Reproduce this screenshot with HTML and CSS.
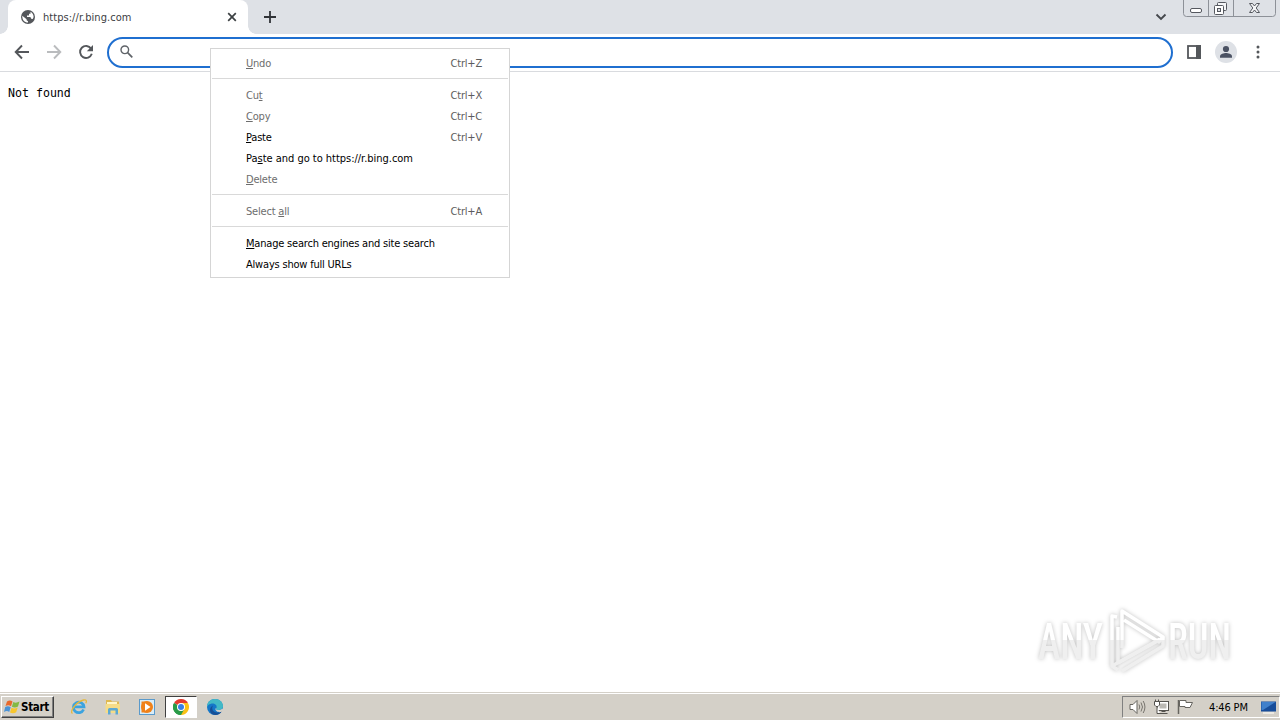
FILE: index.html
```html
<!DOCTYPE html>
<html lang="en">
<head>
  <meta charset="UTF-8" />
  <meta name="viewport" content="width=device-width, initial-scale=1.0"/>
  <title>https://r.bing.com</title>
  <link rel="stylesheet" href="styles.css">
</head>
<body>

  <!-- Tab strip -->
  <header class="tab-strip">
    <div class="tab">
      <svg class="globe" width="16" height="16" viewBox="0 0 16 16">
        <circle cx="8" cy="8" r="7" fill="#54575b"/>
        <path d="M2.300 6.800l4.300 3.400v1l1.400 1v1.400C4.500 13.600 2 11 2.300 6.800z M10.500 2.700c2 1 3.200 3 3.100 5.300l-.8 2-1.600-.3-.8-1.700H7V6.500h2V4.800h1.500z" fill="#fff"/>
      </svg>
      <span class="tab-title">https://r.bing.com</span>
      <svg class="tab-close" width="10" height="10" viewBox="0 0 10 10">
        <path d="M1.200 1.200l7.600 7.600M8.800 1.200L1.200 8.800" stroke="#3c4043" stroke-width="1.700"/>
      </svg>
    </div>
    <svg class="new-tab" width="12" height="12" viewBox="0 0 12 12">
      <path d="M6 0v12M0 6h12" stroke="#303338" stroke-width="1.800"/>
    </svg>
    <svg class="tab-search" width="12" height="8" viewBox="0 0 12 8">
      <path d="M1.500 1.500L6 6l4.500-4.500" fill="none" stroke="#45484d" stroke-width="1.900"/>
    </svg>
    <!-- Window buttons -->
    <svg class="window-buttons" width="97" height="18" viewBox="0 0 97 18">
      <path d="M.5 0v13.500q0 3 3 3h86q3 0 3-3V0M25.500 0v16.500M50.500 0v16.500" fill="none" stroke="#8d9198"/>
      <rect x="7.500" y="8.500" width="11" height="4" rx="1.500" fill="#fff" stroke="#55585f"/>
      <rect x="34.500" y="2.500" width="9" height="8" rx="1" fill="#f4f5f7" stroke="#55585f"/>
      <rect x="31.500" y="5.500" width="9" height="9" rx="1" fill="#fff" stroke="#55585f"/>
      <rect x="34.500" y="8.500" width="3" height="3" fill="#dee1e6" stroke="#55585f"/>
      <path d="M66.500 3.500h3l2 2.500 2-2.500h3l-3.300 4.500 3.300 4.500h-3l-2-2.500-2 2.500h-3L69.800 8z" fill="#f4f5f7" stroke="#55585f"/>
    </svg>
  </header>

  <!-- Toolbar -->
  <nav class="toolbar">
    <svg width="16" height="16" viewBox="0 0 16 16">
      <path d="M15 8H2M8 1.500L1.700 8 8 14.500" fill="none" stroke="#54575b" stroke-width="1.900"/>
    </svg>
    <svg width="16" height="16" viewBox="0 0 16 16">
      <path d="M1 8h13M8 1.500L14.300 8 8 14.500" fill="none" stroke="#babcbe" stroke-width="1.900"/>
    </svg>
    <svg width="16" height="16" viewBox="0 0 16 16">
      <path d="M13.100 4.600A6 6 0 1 0 13.800 9.800" fill="none" stroke="#54575b" stroke-width="1.900"/>
      <path d="M15 1v6.200H8.800z" fill="#54575b"/>
    </svg>
    <div class="omnibox">
      <svg width="13" height="13" viewBox="0 0 13 13">
        <circle cx="4.800" cy="4.800" r="3.800" fill="none" stroke="#5f6368" stroke-width="1.400"/>
        <path d="M7.600 7.600l4.700 4.700" stroke="#5f6368" stroke-width="1.700"/>
      </svg>
    </div>
    <svg class="side-panel" width="14" height="14" viewBox="0 0 14 14">
      <rect x="1" y="1" width="12" height="12" fill="#fff" stroke="#54575b" stroke-width="1.800"/>
      <path d="M9 0h5v14H9z" fill="#54575b"/>
    </svg>
    <svg class="profile" width="22" height="22" viewBox="0 0 22 22">
      <circle cx="11" cy="11" r="11" fill="#dee1e6"/>
      <circle cx="11" cy="8" r="3.100" fill="#4b5263"/>
      <path d="M5 16.800v-1.500c0-2 4-3.200 6-3.200s6 1.200 6 3.200v1.500z" fill="#4b5263"/>
    </svg>
    <svg class="more" width="4" height="14" viewBox="0 0 4 14">
      <circle cx="2" cy="2" r="1.500" fill="#54575b"/>
      <circle cx="2" cy="7" r="1.500" fill="#54575b"/>
      <circle cx="2" cy="12" r="1.500" fill="#54575b"/>
    </svg>
  </nav>

  <!-- Page content -->
  <main class="page">
    <pre>Not found</pre>

    <svg class="watermark" width="220" height="80" viewBox="0 0 220 80">
      <defs>
        <linearGradient id="fade" gradientUnits="userSpaceOnUse" x1="0" y1="0" x2="0" y2="80">
          <stop offset="0.460" stop-color="#fff"/>
          <stop offset="0.460" stop-color="#efefef"/>
        </linearGradient>
      </defs>
      <g class="watermark-text">
        <text x="8" y="56" textLength="65" lengthAdjust="spacingAndGlyphs">ANY</text>
        <text x="138" y="56" textLength="63" lengthAdjust="spacingAndGlyphs">RUN</text>
      </g>
      <!-- Interlocked play triangles -->
      <g class="watermark-logo">
        <path d="M87 14l-5-1v50l6 4M82 63V18"/>
        <path d="M92 45V8l41 26-4 5-35-22"/>
        <path d="M88 59V24M88 60l42-24"/>
        <path d="M92 68l41-25v-8L82 63"/>
      </g>
    </svg>
  </main>

  <!-- Taskbar -->
  <footer class="taskbar">
    <div class="start">
      <svg width="17" height="16" viewBox="0 0 17 16">
        <path d="M3 2.500Q6 .5 8.500 2.500L7 7.200Q4.500 5.500 1.500 7z" fill="#e8692c"/>
        <path d="M9.300 3Q12 4.500 15.500 2.500L14 7.500Q11 9.200 7.900 7.700z" fill="#83b944"/>
        <path d="M1.200 8Q4 6.300 6.700 8.200L5.200 13Q3 11.200 0 13z" fill="#4a93d6"/>
        <path d="M7.500 8.800Q10.500 10.300 13.700 8.500L12.200 13.300Q9.200 15.200 6 13.500z" fill="#f7c62e"/>
      </svg>
      <span>Start</span>
    </div>

    <div class="launchers">
      <div class="launcher">
        <svg width="18" height="18" viewBox="0 0 18 18">
          <path d="M13.600 11.500A5.300 5.300 0 1 1 14 8.800H5" fill="none" stroke="#3ba3df" stroke-width="2.700"/>
          <path d="M2.500 15.500C-1 14 6 4 13.500 2c3-.8 3.500 1 2.300 3.300" fill="none" stroke="#e5b83c" stroke-width="1.300"/>
        </svg>
      </div>
      <div class="launcher">
        <svg width="18" height="18" viewBox="0 0 18 18">
          <path d="M2 2h5l1 1.500h7V14H2z" fill="#dfb951"/>
          <path d="M3 4h10v3H3z" fill="#fff6c9"/>
          <path d="M1.500 6H16v9H1.500z" fill="#f5dc88"/>
          <path d="M4 16.500v-5q0-1.500 1.500-1.500h7q1.500 0 1.500 1.500v5h-2.500v-4h-5v4z" fill="#5ca9d3"/>
        </svg>
      </div>
      <div class="launcher">
        <svg width="18" height="18" viewBox="0 0 18 18">
          <rect x="1.500" y="1.500" width="15" height="15" fill="#d9edf8" stroke="#5a9acb"/>
          <circle cx="9" cy="9" r="6" fill="#f08118"/>
          <path d="M3.500 3.500h5v11h-5z" fill="#f08118"/>
          <path d="M7 5.300l5.500 3.700L7 12.700z" fill="#fff"/>
        </svg>
      </div>
      <div class="launcher active">
        <svg width="16" height="16" viewBox="0 0 16 16">
          <path d="M8 8L1.070 4A8 8 0 0 1 14.930 4z" fill="#e33b2e"/>
          <path d="M8 8l6.930-4A8 8 0 0 1 8 16z" fill="#fbc116"/>
          <path d="M8 8v8A8 8 0 0 1 1.070 4z" fill="#299b48"/>
          <path d="M8 4h6.930L11.460 10 8 16 4.540 10z" fill="#fbc116"/>
          <path d="M1.070 4L4.540 10 8 12l3.400-2L8 16A8 8 0 0 1 1.070 4z" fill="#299b48"/>
          <circle cx="8" cy="8" r="4" fill="#fff"/>
          <circle cx="8" cy="8" r="3" fill="#377fe6"/>
        </svg>
      </div>
      <div class="launcher">
        <svg width="18" height="18" viewBox="0 0 18 18">
          <circle cx="9" cy="9" r="8" fill="#1577c8"/>
          <path d="M1 9C1 4 4.500 1 9 1c5 0 8 3.500 8 7 0 3-2.500 4-5 4-2 0-2.500-1-1.500-2C11.500 7 8 5 5 5.800 2.800 6.300 1.500 7.500 1 9z" fill="#42b9c6"/>
          <path d="M7 7.500c-2 3 0 7 4 7 2 0 3.500-.5 5-1.500-2 4-7 5-10 3S3.500 9 7 7.500z" fill="#174f96"/>
          <path d="M10.500 10c-1 1-.5 2 1.500 2 1.700 0 3.300-.4 4.300-1.500L18 12.500l-3 1.500c-3 .7-6-1-5.500-3.500z" fill="#d4d0c8"/>
        </svg>
      </div>
    </div>

    <div class="tray">
      <svg width="17" height="16" viewBox="0 0 17 16">
        <path d="M1 5.500h3l4-4v13l-4-4H1z" fill="#fff" stroke="#66645f"/>
        <path d="M10 5.500q1.500 2.500 0 5M12 3.500q3 4.500 0 9M14.200 2q3.500 6 0 12" fill="none" stroke="#77746e"/>
      </svg>
      <svg width="17" height="16" viewBox="0 0 17 16">
        <rect x="4.500" y="2.500" width="11" height="9" fill="#fff" stroke="#55534f"/>
        <rect x="6.500" y="4.500" width="7" height="5" fill="#bbb9b4"/>
        <path d="M6.500 14.500h8M8.500 12.500h4" fill="none" stroke="#55534f"/>
        <path d="M1.500 2.500h5V6L5 7.500H3L1.500 6zM2.500 2.500V.5M5.500 2.500V.5M4 7.500v7h3" fill="#fff" stroke="#55534f"/>
      </svg>
      <svg width="17" height="16" viewBox="0 0 17 16">
        <path d="M1.500 1v14" stroke="#66645f" stroke-width="1.500"/>
        <path d="M2.500 1.500H9v2h6.500l-2.500 5H8v-1H2.500z" fill="#fff" stroke="#66645f"/>
      </svg>
      <span class="clock">4:46 PM</span>
      <svg width="17" height="16" viewBox="0 0 17 16">
        <path d="M1 2.500h15v10H1z" fill="#174d9a"/>
        <path d="M1.500 3h14L3 11H1.500z" fill="#4080cb"/>
        <path d="M3 14h11" stroke="#ece9e2" stroke-width="2"/>
      </svg>
    </div>
  </footer>

  <!-- Context menu over the address bar -->
  <div class="context-menu">
    <div class="item disabled"><span><u>U</u>ndo</span><kbd>Ctrl+Z</kbd></div>
    <hr>
    <div class="item disabled"><span>Cu<u>t</u></span><kbd>Ctrl+X</kbd></div>
    <div class="item disabled"><span><u>C</u>opy</span><kbd>Ctrl+C</kbd></div>
    <div class="item"><span><u>P</u>aste</span><kbd>Ctrl+V</kbd></div>
    <div class="item paste-go"><span>Pa<u>s</u>te and go to https://r.bing.com</span></div>
    <div class="item disabled"><span><u>D</u>elete</span></div>
    <hr>
    <div class="item disabled"><span>Select <u>a</u>ll</span><kbd>Ctrl+A</kbd></div>
    <hr>
    <div class="item"><span><u>M</u>anage search engines and site search</span></div>
    <div class="item"><span>Always show full URLs</span></div>
  </div>

</body>
</html>
```
FILE: styles.css
```css
* {
  box-sizing: border-box;
}

body {
  margin: 0;
  width: 1280px;
  height: 720px;
  overflow: hidden;
  display: flex;
  flex-direction: column;
  background: #fff;
  font-family: 'DejaVu Sans Condensed', 'DejaVu Sans', sans-serif;
  font-size: 11px;
  font-stretch: condensed;
  color: #000;
}

svg {
  display: block;
  flex: none;
}

/* Tab strip */
.tab-strip {
  height: 34px;
  flex: none;
  display: flex;
  background: #dee1e6;
  padding-left: 8px;
}

.tab {
  position: relative;
  width: 240px;
  height: 34px;
  display: flex;
  align-items: center;
  padding: 0 11px 0 12px;
  background: #fff;
  border-radius: 8px 8px 0 0;
}

/* Curved feet of the active tab */
.tab::before,
.tab::after {
  content: "";
  position: absolute;
  bottom: 0;
  width: 8px;
  height: 8px;
}

.tab::before {
  left: -8px;
  background: radial-gradient(circle at 0 0, transparent 7.5px, #fff 8px);
}

.tab::after {
  right: -8px;
  background: radial-gradient(circle at 100% 0, transparent 7.5px, #fff 8px);
}

.tab-title {
  flex: 1;
  margin-left: 7px;
  color: #3c4043;
  letter-spacing: 0.05px;
}

.new-tab {
  margin: 11px 0 0 16px;
}

.tab-search {
  margin: 13px 16px 0 auto;
}

/* Toolbar */
.toolbar {
  height: 38px;
  flex: none;
  display: flex;
  align-items: center;
  gap: 16px;
  padding: 0 20px 1px 14px;
  border-bottom: 1px solid #d9dbdf;
}

.omnibox {
  flex: none;
  width: 1066px;
  height: 31px;
  margin-left: -3px;
  padding: 0 0 1px 11px;
  display: flex;
  align-items: center;
  border: 2px solid #1f6fd0;
  border-radius: 16px;
}

.side-panel {
  margin-left: -2px;
}

.profile {
  margin-left: -2px;
}

.more {
  margin-left: 3px;
}

/* Page */
.page {
  flex: 1;
  position: relative;
  padding: 14px 8px;
}

.page pre {
  margin: 0;
  font-family: 'DejaVu Sans Mono', monospace;
  font-size: 11.6px;
  line-height: 15px;
}

.watermark {
  position: absolute;
  left: 1030px;
  top: 531px;
  filter: drop-shadow(0 0 2px rgba(0, 0, 0, 0.25));
}

.watermark-text {
  font-family: Roboto, sans-serif;
  font-size: 50px;
  font-weight: 500;
  fill: url(#fade);
}

.watermark-logo {
  fill: none;
  stroke: url(#fade);
  stroke-width: 3.5;
  stroke-linejoin: round;
}

/* Taskbar */
.taskbar {
  height: 28px;
  flex: none;
  display: flex;
  align-items: center;
  padding-left: 1px;
  background: #d4d0c8;
  border-top: 1px solid #d4d0c8;
  box-shadow: inset 0 1px #fff;
}

.start {
  width: 53px;
  height: 22px;
  margin-top: 1px;
  display: flex;
  align-items: center;
  padding-left: 2px;
  border: 1px solid;
  border-color: #fff #404040 #404040 #fff;
  box-shadow: inset -1px -1px #808080;
  font-size: 11.5px;
  font-weight: bold;
  letter-spacing: -0.3px;
}

.launchers {
  display: flex;
  margin-left: 8px;
}

.launcher {
  width: 32px;
  height: 22px;
  margin: 1px 1px 0;
  display: flex;
  align-items: center;
  justify-content: center;
}

.launcher.active {
  background: #fff;
  border: 1px solid;
  border-color: #404040 #fff #fff #404040;
}

.tray {
  width: 158px;
  height: 22px;
  margin: 1px 0 0 auto;
  display: flex;
  align-items: center;
  gap: 7px;
  padding-left: 6px;
  border: 1px solid;
  border-color: #808080 #fff #fff #808080;
}

.clock {
  width: 42px;
  margin: 0 2px 0 8px;
  white-space: nowrap;
  letter-spacing: -0.15px;
}

/* Context menu */
.context-menu {
  position: absolute;
  left: 210px;
  top: 48px;
  width: 300px;
  height: 230px;
  padding: 4px 1px 3px;
  background: #fff;
  border: 1px solid #d5d5d5;
  letter-spacing: -0.2px;
}

.context-menu .item {
  height: 21px;
  display: flex;
  justify-content: space-between;
  align-items: center;
  padding: 0 26px 0 34px;
}

.context-menu .disabled {
  color: #6d6d6d;
}

.context-menu .paste-go {
  letter-spacing: -0.02px;
}

.context-menu kbd {
  font-family: inherit;
  color: #5c5c5c;
}

.context-menu u {
  text-underline-offset: 1px;
  text-decoration-thickness: 1px;
}

.context-menu hr {
  margin: 4px 0 6px;
  border: 0;
  border-top: 1px solid #d9d9d9;
}
```
